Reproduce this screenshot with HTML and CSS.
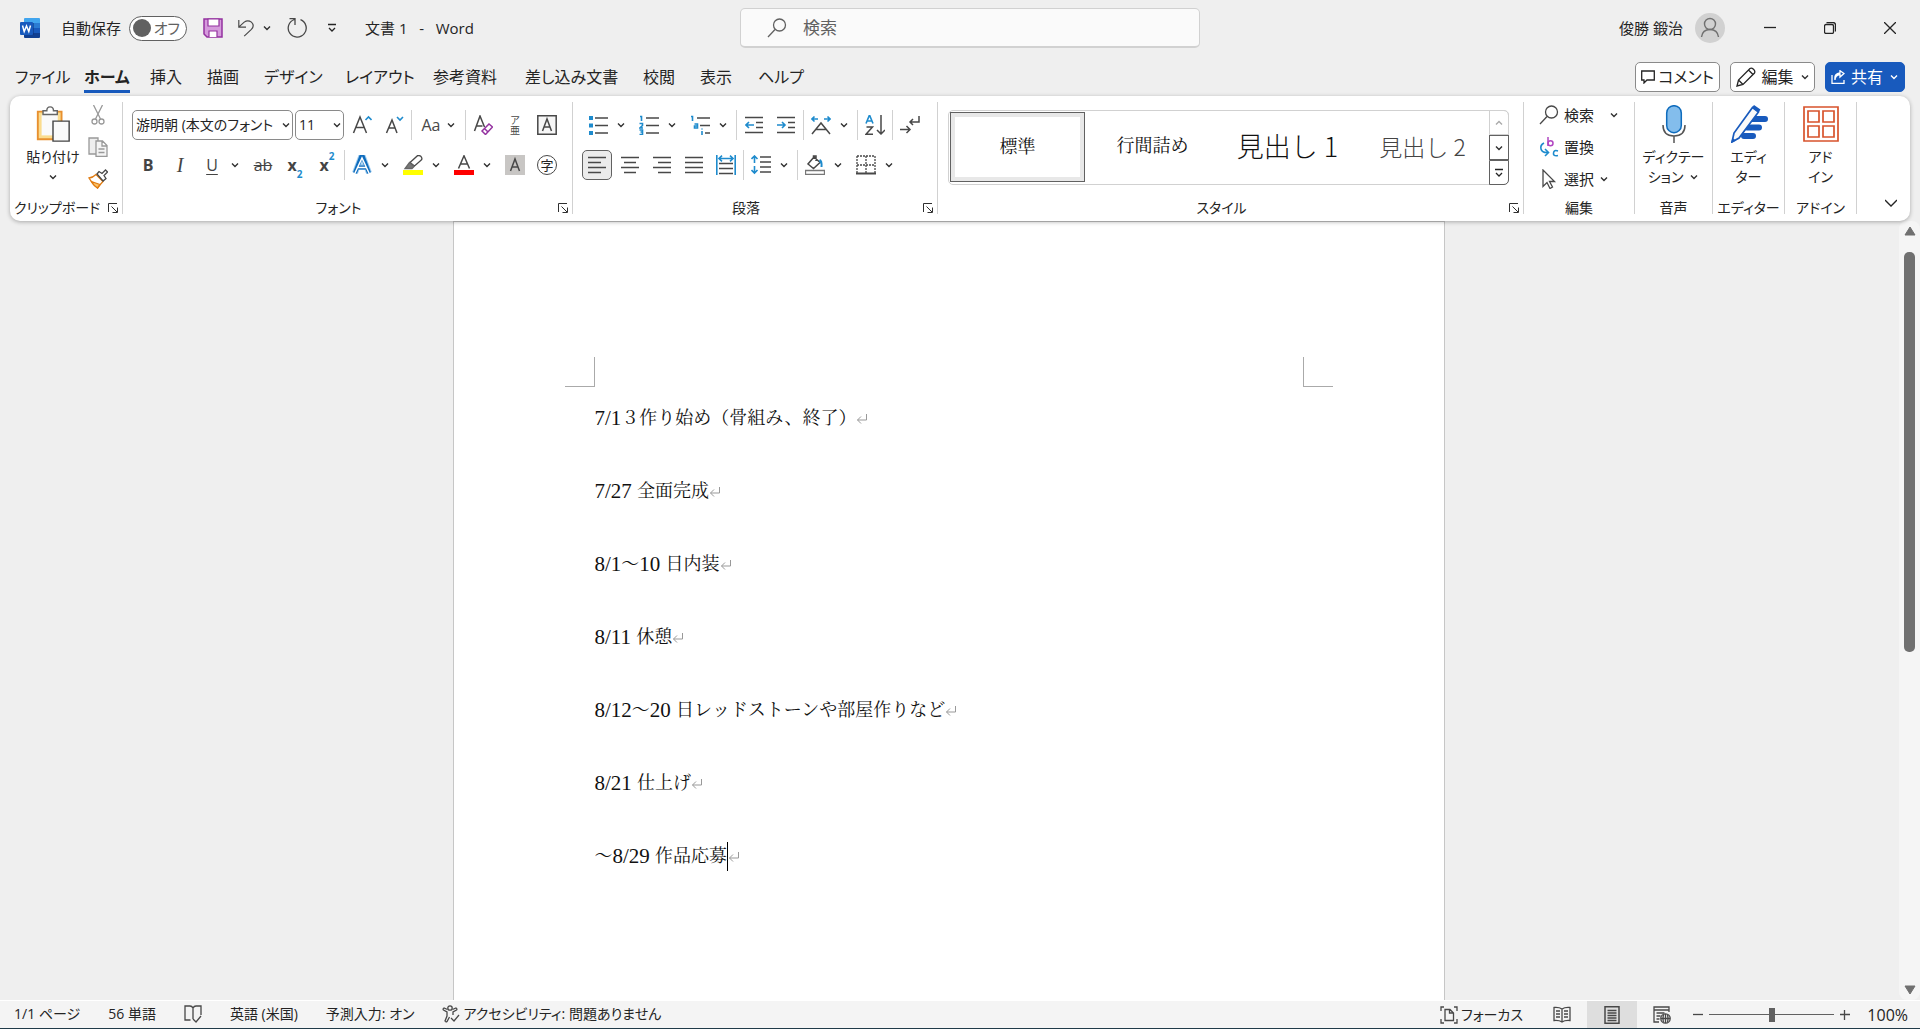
FILE: index.html
```html
<!DOCTYPE html>
<html lang="ja">
<head>
<meta charset="utf-8">
<title>文書 1 - Word</title>
<link rel="stylesheet" href="styles.css">
</head>
<body>
<svg class="sprite" aria-hidden="true">
  <symbol id="chev" viewBox="0 0 10 10"><path d="M2 3.5l3 3 3-3"/></symbol>
  <symbol id="launch" viewBox="0 0 10 10"><path d="M.5 9V.5H9M3.500 3.500L9 9M9.500 4.500v5h-5"/></symbol>
  <symbol id="ret" viewBox="0 0 12 12"><path d="M10.500 1v6H1.500M5 3.500L1.500 7 5 10.500"/></symbol>
  <symbol id="lens" viewBox="0 0 20 20"><circle cx="12.500" cy="7" r="6"/><path d="M8 11.500L1 19"/></symbol>
</svg>

<header class="titlebar">
  <div class="title-left">
    <svg class="app-icon" viewBox="0 0 20 20"><path fill="#41a5ee" d="M5 0h14q1 0 1 1v4H4V1q0-1 1-1z"/><path fill="#2b7cd3" d="M4 5h16v5H4z"/><path fill="#185abd" d="M4 10h16v5H4z"/><path fill="#103f91" d="M4 15h16v4q0 1-1 1H5q-1 0-1-1z"/><path fill="#0b2f78" opacity=".5" d="M4 5h10v12H4z"/><rect y="4" width="13" height="13" rx="1" fill="#185abd"/><path fill="none" stroke="#fff" stroke-width="1.500" d="M2.500 7.500l1.700 6 2.300-5.500 2.300 5.500 1.700-6"/></svg>
    <label class="autosave" for="autosave">自動保存</label>
    <button class="toggle" id="autosave" role="switch" aria-checked="false"><span class="knob"></span>オフ</button>
    <button class="qat" aria-label="上書き保存"><svg class="i20" viewBox="0 0 20 20"><path fill="#d59bdc" stroke="#9432a0" stroke-width="1.500" d="M1 1h18v18H4l-3-3z"/><path fill="#fff" stroke="#9432a0" stroke-width="1.200" d="M5 1h11v7H5zM6 19v-6h8v6"/></svg></button>
    <button class="qat qat-undo" aria-label="元に戻す"><svg class="i18 ln" viewBox="0 0 18 20"><path d="M1 1v8h8M1.500 8.500L7 3.500Q11 .5 15 3.500q4 4 0 8L7 19"/></svg><svg class="chev"><use href="#chev"/></svg></button>
    <button class="qat" aria-label="繰り返し"><svg class="i20 ln" viewBox="0 0 20 20"><path d="M2.500 0.700H8V7M7.500 1.500a9 9 0 1 0 6 .2"/></svg></button>
    <button class="qat" aria-label="クイック アクセスのカスタマイズ"><svg class="i10 ln dark" viewBox="0 0 10 10"><path d="M1 1.500h8M2 5l3 3 3-3"/></svg></button>
    <h1 class="doc-title">文書 1&nbsp;&nbsp; -&nbsp;&nbsp; Word</h1>
  </div>
  <label class="search"><svg class="i20 ln grey"><use href="#lens"/></svg><input type="search" placeholder="検索" aria-label="検索"></label>
  <div class="title-right">
    <button class="account">俊勝 鍛治<span class="avatar"><svg viewBox="0 0 30 30"><circle cx="15" cy="11" r="5.500"/><path d="M6.500 24q1-7.500 8.500-7.500t8.500 7.500"/></svg></span></button>
    <button class="win" aria-label="最小化"><svg class="i12 ln dark" viewBox="0 0 12 12"><path d="M0 5.500h12"/></svg></button>
    <button class="win" aria-label="元に戻す (縮小)"><svg class="i12 ln dark" viewBox="0 0 12 12"><rect x=".5" y="2.500" width="9" height="9" rx="1.500"/><path d="M2.500 .5H9q2.500 0 2.500 2.500v6.500"/></svg></button>
    <button class="win" aria-label="閉じる"><svg class="i12 ln dark" viewBox="0 0 12 12"><path d="M0 0l12 12M12 0L0 12"/></svg></button>
  </div>
</header>

<div class="tabrow">
  <nav class="tabs">
    <a href="#file">ファイル</a><a href="#home" class="active">ホーム</a><a href="#insert">挿入</a><a href="#draw">描画</a><a href="#design">デザイン</a><a href="#layout">レイアウト</a><a href="#ref">参考資料</a><a href="#mail">差し込み文書</a><a href="#review">校閲</a><a href="#view">表示</a><a href="#help">ヘルプ</a>
  </nav>
  <div class="actions">
    <button><svg class="i14 ln dark" viewBox="0 0 14 14"><path d="M.7 1h12.600v9H6l-3 3v-3H.7z"/></svg>コメント</button>
    <button class="mode"><svg class="i20 ln dark" viewBox="0 0 20 20"><path d="M1 19l1.500-6L14 1.500q1.500-1 3.500.8t1 3.700L7 17.500zM12.500 3l4.500 4.500M2.500 13L7 17.500"/></svg>編集<svg class="chev"><use href="#chev"/></svg></button>
    <button class="share"><svg class="i14 ln" viewBox="0 0 14 14"><path d="M1 5v8.300h12V10M4 10q0-5 5-5.500V7l4-3.500L9 .7V3Q3 3.500 4 10z"/></svg>共有<svg class="chev"><use href="#chev"/></svg></button>
  </div>
</div>

<section class="ribbon" aria-label="リボン">
  <div class="group">
    <div class="body clip">
      <button class="big paste"><svg class="i38" viewBox="0 0 38 40"><path fill="#fbdc8e" stroke="#e8902f" stroke-width="2" d="M3 7h25v29H3z"/><path fill="#fafafa" d="M7 10h17v22H7z"/><path fill="#fff" stroke="#666" stroke-width="1.500" d="M8.500 10V6h4q0-4 3.500-4t3.500 4h4v4z"/><path fill="#fafafa" stroke="#444" stroke-width="1.500" d="M19 17h17v21H19z"/></svg>貼り付け<svg class="chev"><use href="#chev"/></svg></button>
      <div class="stack">
        <button aria-label="切り取り"><svg class="i20 ln lite" viewBox="0 0 20 20"><path d="M5.500 0l7 14M14.500 0l-7 14"/><circle cx="6.500" cy="16.500" r="2.500"/><circle cx="13.500" cy="16.500" r="2.500"/></svg></button>
        <button aria-label="コピー"><svg class="i20 ln lite" viewBox="0 0 20 20"><path fill="#eee" d="M1 1h9v16H1z"/><path fill="#f4f4f4" d="M8 4h6.500L19 8.500V19.300H8zM14 4v5h5M10.500 12h6M10.500 15.500h6"/></svg></button>
        <button aria-label="書式のコピー"><svg class="i20 ln" viewBox="0 0 20 20"><path stroke="#e07b10" fill="#fff" d="M1 9q4-.5 7-3.500l7 7q-2 2-5.500 6.500Q4 15 1 9z"/><path fill="#fbc36a" stroke="#e07b10" d="M3.500 12.500q4 1.500 8.500 3l-2.500 3.500q-4-2.500-6-6.500z"/><path fill="#fff" d="M9 5l2-2.500 3 2L17.500 1l2 2L16 6.500l2 3-3 2.500z"/></svg></button>
      </div>
    </div>
    <div class="foot"><span>クリップボード</span><button aria-label="クリップボードの設定"><svg class="launch"><use href="#launch"/></svg></button></div>
  </div>

  <div class="group">
    <div class="body rows">
      <div class="row">
        <span class="combo font-name"><select aria-label="フォント"><option>游明朝 (本文のフォント</option></select><svg class="chev"><use href="#chev"/></svg></span>
        <span class="combo font-size"><select aria-label="フォント サイズ"><option>11</option></select><svg class="chev"><use href="#chev"/></svg></span>
        <button class="tool" aria-label="拡大"><svg class="i20 ln" viewBox="0 0 20 20"><path d="M1.500 18L8 2l6.500 16M4 12.500h8" stroke-width="1.500"/><path class="b" d="M13.500 5l3-3 3 3"/></svg></button>
        <button class="tool" aria-label="縮小"><svg class="i20 ln" viewBox="0 0 20 20"><path d="M2.500 18L8 5l5 13M4.500 13h7" stroke-width="1.500"/><path class="b" d="M13 2l3 3 3-3"/></svg></button>
        <span class="sep"></span>
        <button class="tool case">Aa<svg class="chev"><use href="#chev"/></svg></button>
        <span class="sep"></span>
        <button class="tool" aria-label="書式のクリア"><svg class="i20 ln" viewBox="0 0 20 20"><path d="M1.500 16L7 1l4.500 11M3.500 11h6" stroke-width="1.500"/><path stroke="#9432a0" stroke-width="1.500" fill="#fff" d="M9 16l7-7 3.500 3-7 7.500zM11.500 13.500l3.500 3.500"/></svg></button>
        <button class="tool ruby" aria-label="ルビ"><span>ア</span><span>亜</span></button>
        <button class="tool" aria-label="囲み線"><svg class="i20 ln" viewBox="0 0 20 20"><path fill="#f6f6f6" stroke-width="1.500" d="M.8 .8h18.400v18.400H.8z"/><path stroke-width="1.500" d="M5.500 16L10 4l4.500 12M7 12h6"/></svg></button>
      </div>
      <div class="row">
        <button class="tool letter bold">B</button>
        <button class="tool letter italic">I</button>
        <button class="tool split letter"><span class="under">U</span><svg class="chev"><use href="#chev"/></svg></button>
        <button class="tool letter strike">ab</button>
        <button class="tool letter bold" aria-label="下付き">x<sub>2</sub></button>
        <button class="tool letter bold" aria-label="上付き">x<sup>2</sup></button>
        <span class="sep"></span>
        <button class="tool split" aria-label="文字の効果"><span><svg class="i20" viewBox="0 0 20 20"><path fill="none" stroke="#9fcdf0" stroke-width="6" d="M3 18L9 2h2l6 16M6 12h8"/><path fill="none" stroke="#0f6cbd" stroke-width="4" d="M3 18L9 2h2l6 16M6 12.500h8"/><path fill="none" stroke="#fff" stroke-width="1.500" d="M3 18L10 3l7 15M5.500 12.500h9"/></svg></span><svg class="chev"><use href="#chev"/></svg></button>
        <button class="tool split" aria-label="蛍光ペン"><span><svg class="i20 ln" viewBox="0 0 20 20"><path fill="#ff0" stroke="none" d="M0 15h20v5H0z"/><path d="M7 7.500L14.500 .7q3-.5 4 1.500t-.5 3L11.500 11z" fill="#fff"/><path fill="#777" stroke="#666" d="M6.500 7.500l4.500 4-2 2H2z"/></svg></span><svg class="chev"><use href="#chev"/></svg></button>
        <button class="tool split" aria-label="フォントの色"><span><svg class="i20 ln" viewBox="0 0 20 20"><path fill="#f00" stroke="none" d="M0 15h20v5H0z"/><path stroke-width="1.500" d="M4.500 13.500L10 .8l5.500 12.700M6.500 9h7"/></svg></span><svg class="chev"><use href="#chev"/></svg></button>
        <button class="tool" aria-label="文字の網かけ"><svg class="i20 ln" viewBox="0 0 20 20"><path fill="#c8c6c4" stroke="none" d="M0 0h20v20H0z"/><path stroke-width="1.500" d="M5.500 16L10 4l4.500 12M7 12h6"/></svg></button>
        <button class="tool" aria-label="囲い文字"><span class="enclosed">字</span></button>
      </div>
    </div>
    <div class="foot"><span>フォント</span><button aria-label="フォントの設定"><svg class="launch"><use href="#launch"/></svg></button></div>
  </div>

  <div class="group">
    <div class="body rows">
      <div class="row">
        <button class="tool split" aria-label="箇条書き"><span><svg class="i20 ln" viewBox="0 0 20 20"><path d="M7 3h13M7 10.500h13M7 18h13"/><path class="bf" d="M1 1h4v4H1zM1 8.500h4v4H1zM1 16h4v4H1z"/></svg></span><svg class="chev"><use href="#chev"/></svg></button>
        <button class="tool split" aria-label="段落番号"><span><svg class="i20 ln" viewBox="0 0 20 20"><path d="M7 3h13M7 10.500h13M7 18h13"/><path class="b" d="M1 1.500h1.500V6M.5 8.500h3v2l-2.500 2.500h3M.5 15h3v4.500h-3M1.500 17h2"/></svg></span><svg class="chev"><use href="#chev"/></svg></button>
        <button class="tool split" aria-label="アウトライン"><span><svg class="i20 ln" viewBox="0 0 20 20"><path d="M7 3h13M10 10.500h10M15 18h5"/><path class="b" d="M1 1.500h1.500V6M4.500 9h3v4h-3v-2h3M12 16v4M12 13.500v1"/></svg></span><svg class="chev"><use href="#chev"/></svg></button>
        <span class="sep"></span>
        <button class="tool" aria-label="インデントを減らす"><svg class="i18 ln" viewBox="0 0 18 18"><path d="M0 1.500h18M11 6.500h7M11 11.500h7M0 16.500h18"/><path class="b" d="M9 9H1M4 6L1 9l3 3"/></svg></button>
        <button class="tool" aria-label="インデントを増やす"><svg class="i18 ln" viewBox="0 0 18 18"><path d="M0 1.500h18M11 6.500h7M11 11.500h7M0 16.500h18"/><path class="b" d="M0 9h8M5 6l3 3-3 3"/></svg></button>
        <span class="sep"></span>
        <button class="tool split" aria-label="拡張書式"><span><svg class="i20 ln" viewBox="0 0 20 20"><path stroke-width="1.500" d="M1 19L10 8l9 11M5 14.500h10"/><path class="b" d="M7 4H1M3.500 1.500L1 4l2.500 2.500M13 4h6M16.500 1.500L19 4l-2.500 2.500"/></svg></span><svg class="chev"><use href="#chev"/></svg></button>
        <span class="sep"></span>
        <button class="tool" aria-label="並べ替え"><svg class="i20 ln" viewBox="0 0 20 20"><path class="b" d="M1 8.500L4.500 0 8 8.500M2 6h5"/><path stroke-width="1.500" d="M1.500 12h6L1 19.300h7M16 0v19M12 15l4 4 4-4"/></svg></button>
        <span class="sep"></span>
        <button class="tool" aria-label="編集記号"><svg class="i20 ln" viewBox="0 0 20 20"><path stroke-width="1.500" d="M19 1v6H10M13 4l-3 3 3 3M0 14.500h10M6.500 11l3.500 3.500L6.500 18"/></svg></button>
      </div>
      <div class="row">
        <button class="tool selected" aria-label="左揃え"><svg class="i18 ln" viewBox="0 0 18 18"><path d="M0 1.500h18M0 6.500h13M0 11.500h18M0 16.500h13"/></svg></button>
        <button class="tool" aria-label="中央揃え"><svg class="i18 ln" viewBox="0 0 18 18"><path d="M0 1.500h18M3 6.500h12M0 11.500h18M3 16.500h12"/></svg></button>
        <button class="tool" aria-label="右揃え"><svg class="i18 ln" viewBox="0 0 18 18"><path d="M0 1.500h18M5 6.500h13M0 11.500h18M5 16.500h13"/></svg></button>
        <button class="tool" aria-label="両端揃え"><svg class="i18 ln" viewBox="0 0 18 18"><path d="M0 1.500h18M0 6.500h18M0 11.500h18M0 16.500h18"/></svg></button>
        <button class="tool" aria-label="均等割り付け"><svg class="i20 ln" viewBox="0 0 20 20"><path d="M3 8.500h14M3 13.500h14M3 18.500h14"/><path class="b" d="M.8 0v20M19.200 0v20M3 3.500h14M6 .7L3 3.500l3 2.800M14 .7l3 2.800-3 2.800"/></svg></button>
        <span class="sep"></span>
        <button class="tool split" aria-label="行間"><span><svg class="i20 ln" viewBox="0 0 20 20"><path d="M9 2h11M9 7h11M9 12h11M9 17h11"/><path class="b" d="M3.500 1v7M.5 4l3-3 3 3M3.500 11v7M.5 15l3 3 3-3"/></svg></span><svg class="chev"><use href="#chev"/></svg></button>
        <span class="sep"></span>
        <button class="tool split" aria-label="塗りつぶし"><span><svg class="i20 ln" viewBox="0 0 20 20"><path stroke="#777" fill="#fff" d="M.5 15.500h19v4H.5z"/><path stroke-width="1.500" d="M9 2L3 9l5.500 4.500L15 7.500zM11 6V1H8.500v3"/><path class="bf" d="M15 4q3 1 2.500 8h-2q.5-4-1.500-6z"/></svg></span><svg class="chev"><use href="#chev"/></svg></button>
        <button class="tool split" aria-label="罫線"><span><svg class="i20 ln" viewBox="0 0 20 20"><path stroke-dasharray="2 1" d="M1 1h18M1 10h18M1 1v17M10 1v17M19 1v17"/><path stroke-width="2" d="M0 18.500h20"/></svg></span><svg class="chev"><use href="#chev"/></svg></button>
      </div>
    </div>
    <div class="foot"><span>段落</span><button aria-label="段落の設定"><svg class="launch"><use href="#launch"/></svg></button></div>
  </div>

  <div class="group">
    <div class="body">
      <div class="gallery">
        <button class="style current">標準</button>
        <button class="style">行間詰め</button>
        <button class="style head1">見出し 1</button>
        <button class="style head2">見出し 2</button>
        <div class="scrolls">
          <button class="off" aria-label="前へ"><svg class="chev up"><use href="#chev"/></svg></button>
          <button aria-label="次へ"><svg class="chev"><use href="#chev"/></svg></button>
          <button aria-label="すべて表示"><svg class="i10 ln dark" viewBox="0 0 10 10"><path d="M1 1.500h8M2 5l3 3 3-3"/></svg></button>
        </div>
      </div>
    </div>
    <div class="foot"><span>スタイル</span><button aria-label="スタイルの設定"><svg class="launch"><use href="#launch"/></svg></button></div>
  </div>

  <div class="group">
    <div class="body edit">
      <button><svg class="i20 ln"><use href="#lens"/></svg>検索<svg class="chev far"><use href="#chev"/></svg></button>
      <button><svg class="i20 ln" viewBox="0 0 20 20"><path stroke="#b146c2" stroke-width="1.500" d="M9 0v9"/><circle cx="11.500" cy="6.300" r="2.500" stroke="#b146c2" stroke-width="1.500"/><path class="b" d="M5 6Q1 8 2 12t7 3.500M6 12l3.500 3.500L6 19M19 14q-4-1.500-4.500 2t4.500 2.500"/></svg>置換</button>
      <button><svg class="i20 ln" viewBox="0 0 20 20"><path fill="#fff" stroke-width="1.300" d="M4 1v16.500l4-4 3 6 2.500-1.500-3-5.500H15.500z"/></svg>選択<svg class="chev"><use href="#chev"/></svg></button>
    </div>
    <div class="foot"><span>編集</span></div>
  </div>

  <div class="group">
    <div class="body"><button class="big"><svg class="i38" viewBox="0 0 38 38"><rect x="11.700" y=".7" width="14.600" height="27" rx="7.300" fill="#83bdec" stroke="#0f6cbd" stroke-width="1.500"/><path fill="none" stroke="#555" stroke-width="1.500" d="M8 20q0 11 11 11t11-11M19 31v7"/></svg><span>ディクテー</span><span>ション <svg class="chev"><use href="#chev"/></svg></span></button></div>
    <div class="foot"><span>音声</span></div>
  </div>
  <div class="group">
    <div class="body"><button class="big"><svg class="i38" viewBox="0 0 38 38"><path stroke="#185abd" stroke-width="6" stroke-linecap="round" d="M22 14h13M17 22.500h12M14 31h9"/><path fill="#fafafa" stroke="#185abd" stroke-width="1.700" d="M2 37l2-9L22.500 2.500l6 4.500L9 33z"/><path fill="#185abd" d="M22 2.500l2-2.500 6.500 4.500L28.500 7.500zM1 38l1.500-5L6 35.500z"/></svg><span>エディ</span><span>ター</span></button></div>
    <div class="foot"><span>エディター</span></div>
  </div>
  <div class="group">
    <div class="body"><button class="big"><svg class="i38" viewBox="0 0 38 38"><path fill="none" stroke="#d8532c" stroke-width="1.700" d="M2 2h34v34H2zM6 6h11v11H6zM21 6h11v11H21zM6 21h11v11H6zM21 21h11v11H21z"/></svg><span>アド</span><span>イン</span></button></div>
    <div class="foot"><span>アドイン</span></div>
  </div>
  <button class="collapse" aria-label="リボンを折りたたむ"><svg class="i12 ln dark" viewBox="0 0 12 12"><path d="M0 3l6 6 6-6"/></svg></button>
</section>

<main class="workspace">
  <div class="canvas">
    <article class="page">
      <div class="corners"><i class="corner-l"></i><i class="corner-r"></i></div>
      <p><b>7/1</b>３作り始め（骨組み、終了）<svg class="ret"><use href="#ret"/></svg></p>
      <p><b>7/27 </b>全面完成<svg class="ret"><use href="#ret"/></svg></p>
      <p><b>8/1</b>～<b>10 </b>日内装<svg class="ret"><use href="#ret"/></svg></p>
      <p><b>8/11 </b>休憩<svg class="ret"><use href="#ret"/></svg></p>
      <p><b>8/12</b>～<b>20 </b>日レッドストーンや部屋作りなど<svg class="ret"><use href="#ret"/></svg></p>
      <p><b>8/21 </b>仕上げ<svg class="ret"><use href="#ret"/></svg></p>
      <p>～<b>8/29 </b>作品応募<i class="caret"></i><svg class="ret"><use href="#ret"/></svg></p>
    </article>
  </div>
  <div class="scrollbar">
    <button aria-label="上へ"><svg class="i12" viewBox="0 0 12 12"><path fill="#707070" stroke="#707070" stroke-linejoin="round" d="M6 2l5 8H1z"/></svg></button>
    <div class="track"><div class="thumb"></div></div>
    <button aria-label="下へ"><svg class="i12" viewBox="0 0 12 12"><path fill="#707070" stroke="#707070" stroke-linejoin="round" d="M6 10l5-8H1z"/></svg></button>
  </div>
</main>

<footer class="status">
  <div class="status-left">
    <button>1/1 ページ</button>
    <button>56 単語</button>
    <button aria-label="校正"><svg class="i18 ln" viewBox="0 0 18 18"><path d="M9 14V3Q8 1 6 1H1v14h5.500M9 3q1-2 3-2h5v9M9 14l3 3 5-6"/></svg></button>
    <button>英語 (米国)</button>
    <button>予測入力: オン</button>
    <button><svg class="i18 ln" viewBox="0 0 18 18"><circle cx="8" cy="3" r="2.200"/><path d="M5.500 4.500L2 3Q.5 4 1.500 5L5 7v4l-2 5q1 1.500 2 .5L7.500 12M10.500 4.500L14 3q1.500 1 .5 2L11 7v3M9 13l3 3 5-6"/></svg>アクセシビリティ: 問題ありません</button>
  </div>
  <div class="status-right">
    <button class="focus"><svg class="i18 ln" viewBox="0 0 18 18"><path d="M4 1H1v4M1 13v4h3M14 1h3v4M17 13v4h-3M5 3.500h5l3.500 3.500v7.500H5zM9.500 3.500V7h4"/></svg>フォーカス</button>
    <button class="view" aria-label="閲覧モード"><svg class="i18 ln" viewBox="0 0 18 18"><path d="M9 3Q6 1 1 1.500v13Q6 14 9 16q3-2 8-1.500v-13Q12 1 9 3zM9 3v13M3 5h4M3 8h4M3 11h4M11 5h4M11 8h4M11 11h4"/></svg></button>
    <button class="view on" aria-label="印刷レイアウト"><svg class="i18 ln" viewBox="0 0 18 18"><path stroke-width="1.500" d="M2 .8h14v16.400H2zM4.500 4.500h9M4.500 7h9M4.500 9.500h9M4.500 12h9M4.500 14.500h9"/></svg></button>
    <button class="view" aria-label="Web レイアウト"><svg class="i18 ln" viewBox="0 0 18 18"><path d="M6 16H1V1h15v5M1 4h15M3.500 7h8M3.500 10h4M3.500 13h3"/><circle cx="12.500" cy="12.500" r="4.700"/><path d="M8 12.500h9M12.500 8v9M10.500 9q-1 3.500 0 7M14.500 9q1 3.500 0 7"/></svg></button>
    <button class="zoom" aria-label="縮小表示"><svg class="i10 ln" viewBox="0 0 10 10"><path d="M0 4.500h10"/></svg></button>
    <input type="range" min="0" max="100" value="50" aria-label="ズーム">
    <button class="zoom" aria-label="拡大表示"><svg class="i10 ln" viewBox="0 0 10 10"><path d="M0 4.500h10M4.500 0v10"/></svg></button>
    <button class="percent">100%</button>
  </div>
</footer>
</body>
</html>
```
FILE: styles.css
```css
* { box-sizing: border-box; }
html, body { height: 100%; }
body {
  margin: 0;
  display: flex;
  flex-direction: column;
  overflow: hidden;
  background: #efefef;
  color: #242424;
  font: 15px/20px "Open Sans", "Noto Sans CJK JP", sans-serif;
  font-feature-settings: "palt";
}
button, input, select {
  font: inherit;
  font-feature-settings: inherit;
  color: inherit;
  background: none;
  border: 0;
  padding: 0;
  margin: 0;
  white-space: nowrap;
}
button { display: flex; align-items: center; justify-content: center; }
svg { display: block; flex: none; fill: none; }
.sprite { position: absolute; width: 0; height: 0; }
.i10 { width: 10px; height: 10px; }
.i12 { width: 12px; height: 12px; }
.i14 { width: 14px; height: 14px; }
.i18 { width: 18px; height: 18px; }
.i20 { width: 20px; height: 20px; }
.i38 { width: 38px; height: 38px; }
.ln { stroke: #484848; stroke-width: 1.3; }
.ln.dark { stroke: #242424; }
.ln.grey { stroke: #616161; }
.ln.lite { stroke: #999; }
.b { stroke: #1e8bcd; stroke-width: 1.6; }
.bf { fill: #1e8bcd; stroke: none; }
.chev { width: 10px; height: 10px; stroke: #303030; stroke-width: 1.4; }
.up { transform: rotate(180deg); }
.launch { width: 10px; height: 10px; stroke: #303030; }

/* title bar */
.titlebar {
  flex: none;
  display: grid;
  grid-template-columns: 1fr 460px 1fr;
  align-items: center;
  height: 56px;
  padding-left: 20px;
}
.title-left, .title-right { display: flex; align-items: center; }
.title-right { justify-content: flex-end; }
.app-icon { width: 20px; height: 20px; margin-right: 21px; }
.autosave { width: 68px; white-space: nowrap; }
.toggle {
  width: 58px;
  height: 25px;
  margin-right: 8px;
  padding: 0 6px 0 3px;
  justify-content: space-between;
  border: 1px solid #616161;
  border-radius: 13px;
  background: #fff;
  color: #616161;
}
.knob { width: 18px; height: 18px; border-radius: 50%; background: #616161; }
.qat { width: 35px; height: 32px; }
.qat-undo { width: 49px; gap: 7px; }
.doc-title { margin: 0 0 0 16px; font-size: 15px; font-weight: 400; white-space: nowrap; }
.search {
  display: flex;
  align-items: center;
  gap: 16px;
  height: 40px;
  padding-left: 26px;
  border: 1px solid #d1d1d1;
  border-bottom-width: 2px;
  border-radius: 5px;
  background: #fafafa;
}
.search input { flex: 1; outline: 0; font-size: 17px; }
.search input::placeholder { color: #616161; opacity: 1; }
.account { gap: 12px; margin-right: 15px; }
.avatar { width: 30px; height: 30px; border-radius: 50%; background: #d1d1d1; }
.avatar svg { stroke: #707070; stroke-width: 1.4; }
.win { width: 60px; height: 46px; }

/* tabs */
.tabrow {
  flex: none;
  display: flex;
  justify-content: space-between;
  height: 40px;
  padding: 0 15px;
}
.tabs {
  display: grid;
  grid-template-columns: 69px 66px 57px 57px 81px 88px 92px 118px 57px 58px auto;
  justify-items: start;
  font-size: 16px;
  line-height: 42px;
}
.tabs a { color: inherit; text-decoration: none; white-space: nowrap; height: 37px; }
.tabs .active { font-weight: 700; border-bottom: 3px solid #185abd; }
.actions { display: flex; gap: 10px; padding-top: 6px; font-size: 16px; }
.actions button {
  height: 30px;
  gap: 3px;
  padding: 0 5px;
  border: 1px solid #8a8a8a;
  border-radius: 5px;
  background: #fff;
}
.actions .mode { width: 85px; gap: 6px; }
.actions .share { width: 80px; background: #185abd; border-color: #185abd; color: #fff; gap: 6px; }
.share .ln, .share .chev { stroke: #fff; }

/* ribbon */
.ribbon {
  flex: none;
  position: relative;
  display: grid;
  grid-template-columns: 113px 450px 365px 1fr 111px 78px 72px 72px 53px;
  margin: 0 10px;
  padding: 6px 0 7px;
  border-radius: 10px;
  background: #fff;
  box-shadow: 0 1px 4px rgba(0, 0, 0, .3);
}
.group {
  display: flex;
  flex-direction: column;
  height: 112px;
  border-right: 1px solid #d1d1d1;
}
.body { flex: 1; }
.foot { display: flex; align-items: center; height: 13px; line-height: 14px; font-size: 14px; }
.foot span { flex: 1; text-align: center; white-space: nowrap; }
.foot button { width: 18px; height: 14px; }
.clip { display: flex; padding-left: 10px; }
.stack { display: grid; grid-template-rows: repeat(3, 32px); width: 20px; margin: -3px 0 0 2px; }
.big {
  flex-direction: column;
  justify-content: flex-start;
  width: 100%;
  padding-top: 3px;
  font-size: 14px;
}
.clip .big { width: 66px; }
.big .i38 { margin-bottom: 4px; }
.big span { display: flex; align-items: center; gap: 6px; }
.big > .chev { margin-top: 5px; }
.rows { display: flex; flex-direction: column; gap: 10px; padding: 8px 0 0 9px; }
.row { display: flex; align-items: center; height: 30px; }
.tool { width: 32px; height: 30px; flex: none; }
.split { width: 51px; gap: 2px; justify-content: flex-start; }
.split span { width: 32px; display: flex; justify-content: center; }
.sep { width: 1px; height: 30px; margin: 0 1px; background: #d1d1d1; flex: none; }
.combo { position: relative; margin-right: 2px; }
.combo select {
  appearance: none;
  width: 100%;
  height: 30px;
  padding-left: 3px;
  border: 1px solid #8a8a8a;
  border-radius: 5px;
  font-size: 14px;
}
.combo .chev { position: absolute; right: 2px; top: 10px; }
.font-name { width: 161px; }
.font-size { width: 49px; }
.case { width: 51px; gap: 5px; font-size: 16px; color: #484848; }
.ruby { flex-direction: column; font-size: 10px; line-height: 10px; color: #484848; }
.letter { font-size: 16px; color: #444; }
.bold { font-weight: 700; }
.italic { font-family: "Liberation Serif", serif; font-style: italic; font-size: 20px; }
.under { text-decoration: underline; text-underline-offset: 3px; }
.strike { text-decoration: line-through; }
.letter sub, .letter sup { font-size: 10px; line-height: 12px; color: #1e8bcd; }
.letter sub { align-self: flex-end; }
.letter sup { align-self: flex-start; }
.enclosed {
  width: 20px;
  height: 20px;
  border: 1px solid #484848;
  border-radius: 50%;
  font-size: 13px;
  line-height: 18px;
}
.selected { width: 30px; margin-right: 2px; border: 1px solid #616161; border-radius: 5px; background: #ebebeb; }
.gallery {
  display: grid;
  grid-template-columns: repeat(4, 135px) 1fr;
  height: 75px;
  margin: 8px 14px 0 10px;
  padding-left: 1px;
  border: 1px solid #d1d1d1;
  border-radius: 5px;
}
.style {
  height: 70px;
  color: #111;
  font-family: "Liberation Serif", "Noto Serif CJK JP", serif;
  font-size: 18px;
  font-feature-settings: normal;
}
.current { margin-top: 1px; border: 1px solid #616161; box-shadow: inset 0 0 0 4px #e8e8e8; }
.head1, .head2 { font-family: "Noto Sans CJK JP", sans-serif; font-weight: 300; }
.head1 { font-size: 27px; }
.head2 { font-size: 23px; color: #444; }
.scrolls { display: grid; grid-template-rows: 1fr 1fr 1fr; margin: -1px; }
.scrolls button { border: 1px solid #616161; }
.scrolls .off { border-color: #d1d1d1; border-radius: 0 5px 0 0; }
.scrolls button:last-child { border-radius: 0 0 5px 0; }
.off .chev { stroke: #aaa; }
.edit { padding: 0 0 0 15px; margin-top: -3px; }
.edit button { height: 32px; gap: 5px; }
.far { margin-left: 10px; }
.collapse { align-self: end; height: 22px; width: 68px; }

/* document */
.workspace { flex: 1; min-height: 0; display: flex; }
.canvas { flex: 1; overflow: hidden; display: flex; justify-content: center; padding-right: 2px; }
.page {
  width: 992px;
  min-height: 100%;
  padding: 135px 141px 0;
  border: 1px solid #c6c6c6;
  border-bottom: 0;
  background: #fff;
  color: #111;
  font: 18px/37px "Liberation Serif", "Noto Serif CJK JP", "Noto Sans CJK JP", serif;
  font-feature-settings: normal;
}
.corners { display: flex; justify-content: space-between; margin: 0 -30px 13px; }
.corners i { width: 30px; height: 30px; border-bottom: 1px solid #aaa; }
.corner-l { border-right: 1px solid #aaa; }
.corner-r { border-left: 1px solid #aaa; }
.page p { margin: 0 0 36px; height: 37px; display: flex; align-items: center; white-space: pre; }
.page b { font-size: 21px; font-weight: 400; }
.ret { width: 12px; height: 12px; stroke: #999; }
.caret { width: 1px; height: 29px; background: #000; }
.scrollbar {
  width: 21px;
  display: flex;
  flex-direction: column;
  border-radius: 8px;
  background: #f5f5f5;
}
.scrollbar button { height: 20px; }
.track { flex: 1; padding: 11px 5px 0; }
.thumb { height: 55%; border-radius: 5px; background: #707070; }

/* status bar */
.status {
  flex: none;
  display: flex;
  justify-content: space-between;
  height: 29px;
  border-top: 1px solid #fff;
  border-bottom: 1px solid #203a48;
  background: #f4f4f4;
}
.status-left { display: flex; gap: 28px; padding: 0 0 1px 14px; font-size: 14px; }
.status-left button { gap: 3px; }
.status-right { display: flex; align-items: center; padding-right: 12px; font-size: 14px; }
.status-right button { height: 27px; }
.focus { gap: 3px; margin-right: 14px; }
.view { width: 50px; }
.view.on { background: #dedede; }
.zoom { width: 22px; }
.status-right input { appearance: none; width: 125px; height: 20px; }
.status-right input::-webkit-slider-runnable-track { height: 14px; background: linear-gradient(#616161, #616161) center / 100% 1px no-repeat; }
.status-right input::-webkit-slider-thumb { appearance: none; width: 6px; height: 14px; background: #616161; }
.percent { width: 52px; justify-content: flex-end; font-size: 16px; }
```
